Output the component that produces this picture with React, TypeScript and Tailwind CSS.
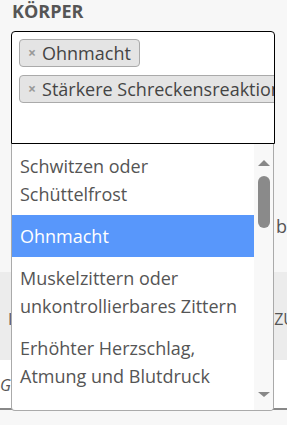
const selected = ["Ohnmacht", "Stärkere Schreckensreaktion"];

const options = [
  { label: "Schwitzen oder Schüttelfrost", active: false },
  { label: "Ohnmacht", active: true },
  { label: "Muskelzittern oder unkontrollierbares Zittern", active: false },
  { label: "Erhöhter Herzschlag, Atmung und Blutdruck", active: false },
  { label: "Extreme Müdigkeit oder Erschöpfung", active: false },
];

function Tag({ label }: { label: string }) {
  return (
    <div className="flex h-[28px] shrink-0 items-center whitespace-nowrap rounded-[4px] border border-[#aaa] bg-[#e4e4e4] pl-[8px] pr-[8px]">
      <span className="mr-[6px] text-[14px] font-bold leading-none text-[#999]">×</span>
      <span className="text-[18px] leading-[26px] text-[#444]">{label}</span>
    </div>
  );
}

function Scrollbar() {
  return (
    <div className="flex w-[19px] flex-col items-center bg-[#f8f8f8] pt-[16px] pb-[13px]">
      <div className="h-0 w-0 border-x-[6px] border-b-[6px] border-x-transparent border-b-[#888]" />
      <div className="mt-[10px] h-[52px] w-[12px] rounded-full bg-[#8a8a8a]" />
      <div className="flex-1" />
      <div className="h-0 w-0 border-x-[6px] border-t-[5px] border-x-transparent border-t-[#888]" />
    </div>
  );
}

export default function App() {
  return (
    <div className="relative h-[425px] w-[287px] overflow-hidden bg-[#f7f7f7] font-['Open_Sans',sans-serif] text-[#555]">
      <div className="px-[11px]">
        <div className="h-[31px] pl-[1px] text-[18px] font-bold leading-[22px] text-[#555]">
          KÖRPER
        </div>
        <div className="flex h-[113px] w-[264px] flex-col items-start gap-[8px] overflow-hidden rounded-t-[4px] border border-black bg-white pl-[7px] pt-[7px]">
          {selected.map((s) => (
            <Tag key={s} label={s} />
          ))}
        </div>
      </div>

      {/* content lying under the open dropdown */}
      <div className="flex h-[128px] justify-end pt-[68px] text-[18px] leading-[28px]">b</div>
      <div className="flex h-[88px] justify-between whitespace-nowrap bg-[#ececec] pt-[37px] text-[16px] leading-[20px]">
        <span className="pl-[8px]">Ich habe keine Symptome</span>
        <span className="mr-[-8px]">ZU</span>
      </div>
      <div className="h-[50px] border-b-2 border-[#888] bg-white pt-[15px] text-[16px] italic leading-[20px]">G</div>

      <div className="absolute left-[11px] top-[144px] flex h-[267px] w-[263px] overflow-hidden rounded-b-[4px] border-x border-b border-[#aaa] bg-white">
        <ul className="flex-1 overflow-hidden pt-[1px]">
          {options.map((o) => (
            <li
              key={o.label}
              className={`py-[7px] pl-[8px] pr-[6px] text-[18px] leading-[28px] ${
                o.active ? "bg-[#5897fb] text-white" : "text-[#555]"
              }`}
            >
              {o.label}
            </li>
          ))}
        </ul>
        <Scrollbar />
      </div>
    </div>
  );
}
